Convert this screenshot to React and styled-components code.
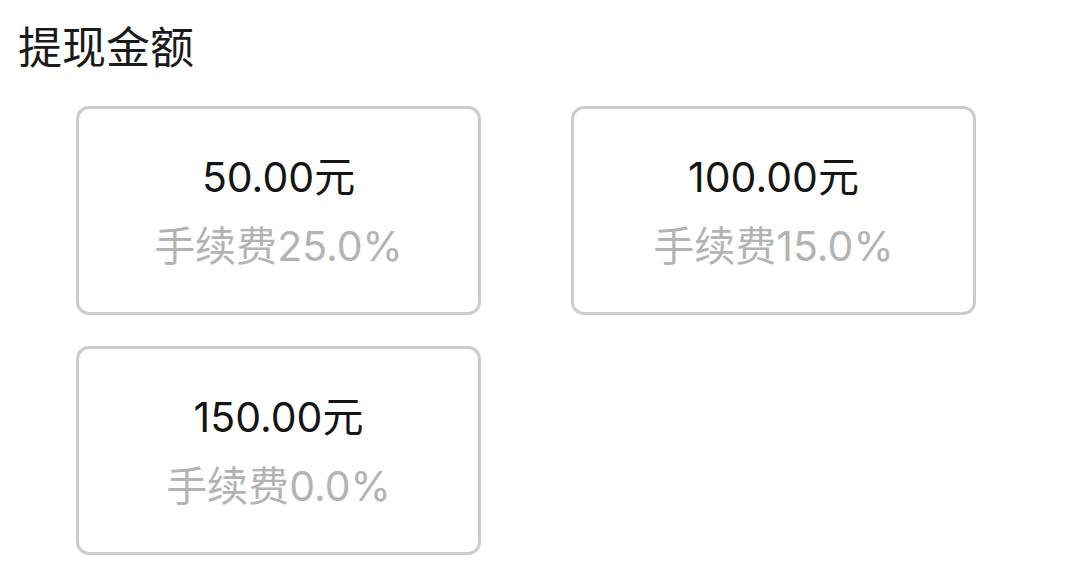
import React from 'react'
import styled, { createGlobalStyle } from 'styled-components'

const options = [
    { amount: '50.00', fee: '25.0' },
    { amount: '100.00', fee: '15.0' },
    { amount: '150.00', fee: '0.0' },
]

export default function App() {
    return (
        <>
            <GlobalStyle />
            <Page>
                <Title>提现金额</Title>
                <CardGrid>
                    {options.map((o) => (
                        <AmountCard key={o.amount}>
                            <Amount>{o.amount}元</Amount>
                            <Fee>手续费{o.fee}%</Fee>
                        </AmountCard>
                    ))}
                </CardGrid>
            </Page>
        </>
    )
}

const GlobalStyle = createGlobalStyle`
    body {
        margin: 0;
        background: #ffffff;
        font-family: Inter, 'Noto Sans CJK SC', sans-serif;
    }
`

const Page = styled.div`
    padding: 22px 18px 0;
`

const Title = styled.div`
    font-size: 44px;
    line-height: 52px;
    color: #1a1a1a;
`

const CardGrid = styled.div`
    display: grid;
    grid-template-columns: 405px 405px;
    column-gap: 90px;
    row-gap: 31px;
    margin: 32px 0 0 58px;
`

const AmountCard = styled.div`
    box-sizing: border-box;
    height: 209px;
    border: 3px solid #cccccc;
    border-radius: 13px;
    display: flex;
    flex-direction: column;
    align-items: center;
    justify-content: center;
    gap: 21px;
    padding-top: 1px;
`

const Amount = styled.span`
    font-size: 41px;
    line-height: 48px;
    color: #151515;
`

const Fee = styled.span`
    font-size: 41px;
    line-height: 48px;
    color: #b3b3b3;
`
